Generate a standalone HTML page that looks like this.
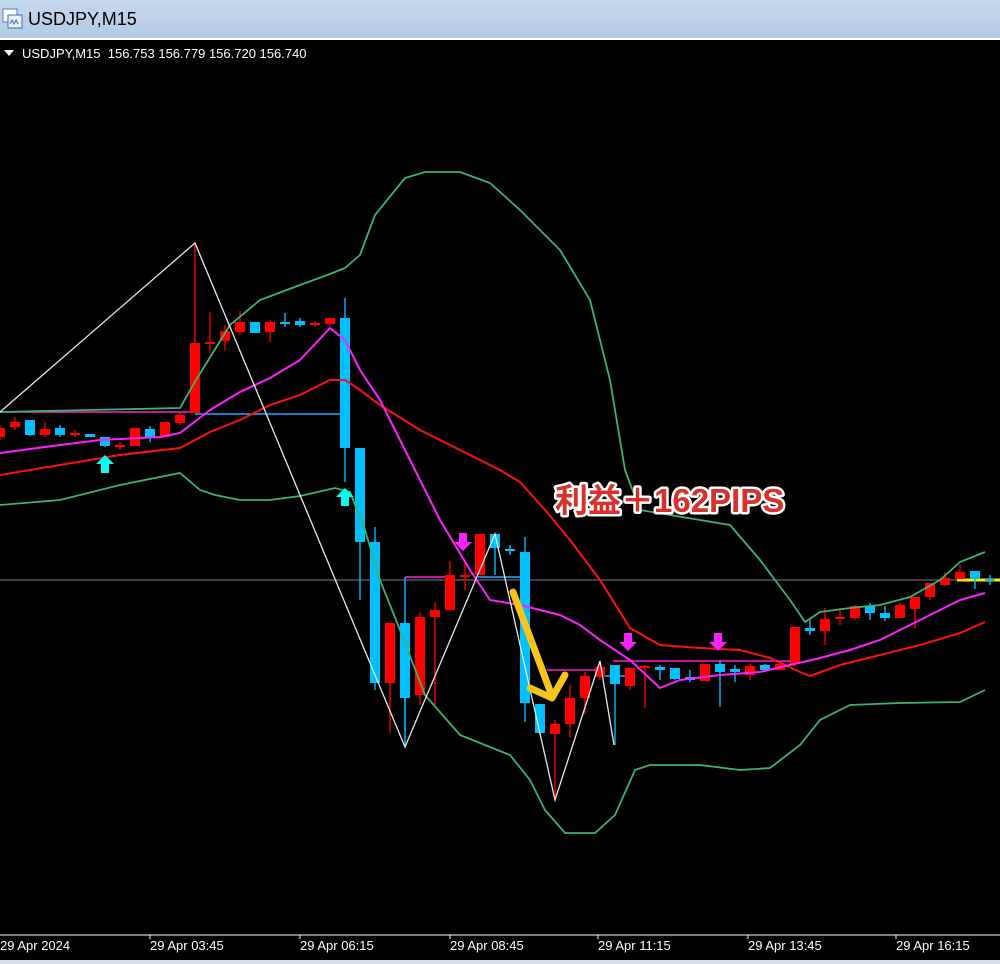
<!DOCTYPE html>
<html><head><meta charset="utf-8"><style>
html,body{margin:0;padding:0;width:1000px;height:964px;overflow:hidden;background:#000;font-family:"Liberation Sans","Noto Sans CJK JP",sans-serif}
#title{position:absolute;left:0;top:0;width:1000px;height:38px;background:linear-gradient(#c5d8ec,#b4cbe3);border-bottom:2px solid #fff}
#title span{position:absolute;left:28px;top:9px;font-size:18px;color:#000}
#hdr{position:absolute;left:22px;top:46px;font-size:13px;color:#fff;white-space:pre}
svg{position:absolute;left:0;top:0}
.ax{position:absolute;top:938px;font-size:13px;color:#fff}
#bot{position:absolute;left:0;top:960px;width:1000px;height:4px;background:#d4dde8}
</style></head><body>
<div id="title"><svg width="24" height="30" viewBox="0 0 24 30" style="left:2px;top:4px"><rect x="1" y="5" width="14" height="13" fill="#fff" stroke="#4a7fc0"/><rect x="6" y="11" width="14" height="13" fill="#e8f0fa" stroke="#3b6fb0"/><path d="M8 20 l2-4 2 4 2-4 2 4" stroke="#3b6fb0" fill="none"/></svg><span>USDJPY,M15</span></div>
<div id="hdr">USDJPY,M15  156.753 156.779 156.720 156.740</div>
<svg width="1000" height="964" id="ch">
<polygon points="4,50 14,50 9,56" fill="#fff"/>
<line x1="0" y1="580" x2="1000" y2="580" stroke="#6a8099" stroke-width="1"/>
<line x1="957" y1="580" x2="1000" y2="580" stroke="#ffea00" stroke-width="3"/>
<line x1="0" y1="412" x2="195" y2="412" stroke="#ff20d0" stroke-width="1.5"/>
<line x1="195" y1="414" x2="345" y2="414" stroke="#20a8ff" stroke-width="1.5"/>
<line x1="405" y1="577" x2="450" y2="577" stroke="#ff20d0" stroke-width="1.5"/>
<line x1="405" y1="577" x2="405" y2="730" stroke="#20a8ff" stroke-width="1.5"/>
<line x1="478" y1="577" x2="525" y2="577" stroke="#20a8ff" stroke-width="1.5"/>
<line x1="547" y1="670" x2="605" y2="670" stroke="#ff20d0" stroke-width="1.5"/>
<line x1="613" y1="661" x2="793" y2="661" stroke="#ff20d0" stroke-width="1.5"/>
<line x1="600" y1="676" x2="630" y2="676" stroke="#20a8ff" stroke-width="1.5"/>
<g id="cd"></g>
<polyline fill="none" stroke="#3cb371" stroke-width="1.8" points="0,412 180,408 196,380 230,325 260,300 300,285 330,274 345,268 360,255 375,215 405,178 425,172 460,172 490,183 520,210 560,250 590,300 610,380 625,470 640,510 700,520 730,525 760,560 790,600 805,622 820,612 850,608 880,605 910,597 940,580 960,562 985,552"/>
<polyline fill="none" stroke="#3cb371" stroke-width="1.8" points="0,505 60,500 120,485 180,473 200,490 215,495 240,500 270,500 300,496 335,488 350,492 365,530 380,580 400,630 425,695 460,735 510,755 530,780 545,810 565,833 595,833 615,815 635,770 650,765 700,765 740,770 770,768 800,745 820,720 850,705 900,703 960,702 985,690"/>
<polyline fill="none" stroke="#ff1010" stroke-width="2" points="0,475 60,465 120,455 180,448 210,432 240,420 270,405 300,395 330,380 345,380 360,390 380,405 420,430 470,455 500,470 520,482 545,510 570,540 600,580 630,628 660,645 700,648 740,650 770,658 800,672 810,676 840,665 880,655 920,645 960,633 985,622"/>
<polyline fill="none" stroke="#ff20ff" stroke-width="2" points="0,453 60,445 100,440 160,437 180,433 210,410 240,392 270,378 300,360 330,328 345,340 360,370 380,400 410,460 440,520 470,570 490,600 520,605 540,610 560,615 580,625 600,640 630,660 660,688 680,680 720,675 760,672 790,665 820,658 850,650 880,640 910,625 940,610 960,600 985,593"/>
<polyline fill="none" stroke="#e8e8e8" stroke-width="1.3" points="0,412 195,243 405,747 495,534 555,800 600,661 614,745"/>
<g fill="#00ffee"><path d="M105 455 l-9 9 h5 v9 h8 v-9 h5 z"/><path d="M345 488 l-9 9 h5 v9 h8 v-9 h5 z"/></g>
<g fill="#ff20ff"><path d="M463 551 l-9 -9 h5 v-9 h8 v9 h5 z"/><path d="M628 651 l-9 -9 h5 v-9 h8 v9 h5 z"/><path d="M718 651 l-9 -9 h5 v-9 h8 v9 h5 z"/></g>
<g fill="none" stroke="#f7c51c" stroke-width="7" stroke-linecap="round" stroke-linejoin="round"><path d="M513 592 L552 696"/><path d="M530 688 L552 698 L565 675"/></g>
<text x="555" y="512" font-size="33" font-weight="bold" fill="#d8302a" stroke="#fff" stroke-width="5" paint-order="stroke" stroke-linejoin="round" font-family="Liberation Sans,Noto Sans CJK JP,sans-serif">利益＋162PIPS</text>
<line x1="0" y1="935" x2="1000" y2="935" stroke="#fff"/>
<g stroke="#fff"><line x1="150" y1="935" x2="150" y2="939"/><line x1="300" y1="935" x2="300" y2="939"/><line x1="450" y1="935" x2="450" y2="939"/><line x1="598" y1="935" x2="598" y2="939"/><line x1="748" y1="935" x2="748" y2="939"/><line x1="896" y1="935" x2="896" y2="939"/></g>
</svg>
<div class="ax" style="left:0">29 Apr 2024</div>
<div class="ax" style="left:150px">29 Apr 03:45</div>
<div class="ax" style="left:300px">29 Apr 06:15</div>
<div class="ax" style="left:450px">29 Apr 08:45</div>
<div class="ax" style="left:598px">29 Apr 11:15</div>
<div class="ax" style="left:748px">29 Apr 13:45</div>
<div class="ax" style="left:896px">29 Apr 16:15</div>
<div id="bot"></div>
<script>
var d=[[0,'r',428,437,425,440],[15,'r',422,427,417,430],[30,'c',420,435,420,436],[45,'r',429,435,423,437],[60,'c',428,435,425,437],[75,'r',433,434,430,437],[90,'c',434,437,434,437],[105,'c',437,446,437,447],[120,'r',445,446,442,450],[135,'r',428,446,428,446],[150,'c',429,438,426,442],[165,'r',422,437,422,437],[180,'r',415,423,413,425],[195,'r',343,413,243,413],[210,'r',342,343,312,353],[225,'r',331,341,325,350],[240,'r',322,332,311,335],[255,'c',322,333,322,333],[270,'r',322,332,320,342],[285,'c',322,323,313,327],[300,'c',321,325,318,327],[315,'r',323,325,321,327],[330,'r',318,324,318,325],[345,'c',318,448,298,482],[360,'c',448,542,448,600],[375,'c',542,683,527,690],[390,'r',623,683,623,733],[405,'c',623,698,623,745],[420,'r',617,695,612,705],[435,'r',610,617,602,705],[450,'r',575,610,561,610],[465,'r',575,576,560,590],[480,'r',534,575,534,575],[495,'c',534,548,534,575],[510,'c',549,551,545,555],[525,'c',552,703,537,722],[540,'c',704,733,704,735],[555,'r',724,734,720,800],[570,'r',698,724,685,738],[585,'r',676,698,672,714],[600,'r',667,677,662,680],[615,'c',665,684,665,745],[630,'r',668,686,668,690],[645,'r',666,668,665,708],[660,'c',667,670,665,680],[675,'c',668,679,668,680],[690,'c',677,680,670,682],[705,'r',664,681,664,681],[720,'c',664,672,660,707],[735,'c',669,672,665,682],[750,'r',666,675,664,680],[765,'c',665,670,664,672],[780,'r',664,670,664,670],[795,'r',627,664,627,667],[810,'c',628,631,618,635],[825,'r',619,631,608,645],[840,'r',617,619,608,625],[855,'r',606,618,605,620],[870,'c',606,613,603,620],[885,'c',613,618,606,621],[900,'r',605,618,602,618],[915,'r',597,609,597,628],[930,'r',583,597,583,600],[945,'r',578,585,572,586],[960,'r',572,579,565,579],[975,'c',571,579,571,589],[990,'c',579,581,575,585]];
var s='';d.forEach(function(c){var col=c[1]=='r'?'#ff0000':'#00c0ff';var wc=c[1]=='r'?'#e00000':'#00b0f0';
s+='<line x1="'+c[0]+'" y1="'+c[4]+'" x2="'+c[0]+'" y2="'+c[5]+'" stroke="'+wc+'" stroke-width="1.5"/>';
s+='<rect x="'+(c[0]-5)+'" y="'+c[2]+'" width="10" height="'+Math.max(2,c[3]-c[2])+'" fill="'+col+'"/>';});
document.getElementById('cd').innerHTML=s;
</script>
</body></html>
